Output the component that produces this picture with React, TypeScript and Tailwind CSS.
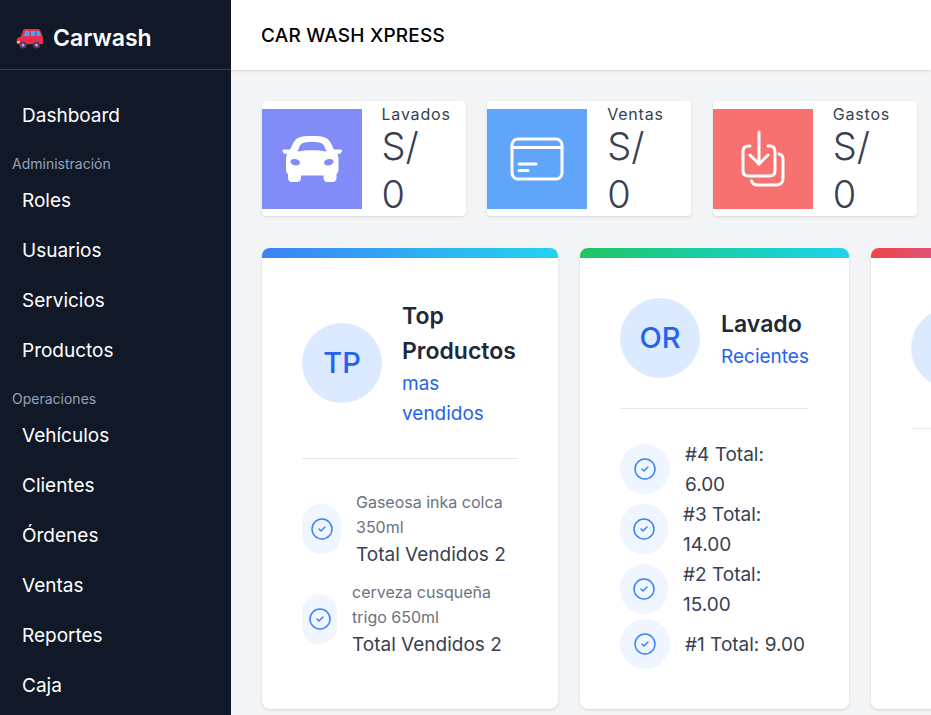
import React from 'react';
import { CircleCheck } from 'lucide-react';

const CarIcon = () => (
  <svg width="60" height="48" viewBox="0 0 60 48" fill="white">
    <path fillRule="evenodd" d="M17 2.500C20 1.300 24 1 30 1s10 .3 13 1.500c3 1.200 5 3.500 6.500 7L52 14.500h6.500c.8 0 1.500.6 1.500 1.300 0 2-1.500 3.200-4 3.200h-.8c1 1.700 1.300 3.800 1.300 6v10c0 1.700-.7 3-2 4v4c0 2.200-1.300 4-3.500 4h-6c-2.200 0-3.500-1.800-3.500-4v-2.500H19V43c0 2.200-1.300 4-3.500 4h-6C7.300 47 6 45.200 6 43v-4c-1.300-1-2-2.300-2-4V25c0-2.200.3-4.300 1.300-6h-.8c-2.500 0-4-1.200-4-3.200 0-.7.700-1.300 1.500-1.300H8l2.500-5c1.500-3.500 3.500-5.800 6.500-7zM21 8c-1.500.5-2.500 1.500-3.200 3l-2.300 5.500c5-.8 9.500-1.200 14.500-1.200s9.500.4 14.500 1.200L42.200 11c-.7-1.500-1.700-2.500-3.200-3-2.500-.7-5.500-1-9-1s-6.500.3-9 1zM12.500 24C9.500 24 8 25.500 8.500 27c.6 2 3 3.500 5.500 3.500 2.500 0 4-1 4-2.500 0-2.300-2.500-4-5.500-4zm35 0c-3 0-5.500 1.700-5.500 4 0 1.500 1.500 2.500 4 2.500s4.900-1.500 5.500-3.500c.5-1.500-1-3-4-3z" />
  </svg>
);

const CardIcon = () => (
  <svg width="54" height="44" viewBox="0 0 54 44" fill="none" stroke="white" strokeWidth="3" strokeLinecap="round" strokeLinejoin="round">
    <rect x="2" y="2" width="50" height="40" rx="6" />
    <path d="M2 10.500h50" />
    <path d="M9 27h17" />
    <path d="M9 33.500h9" />
  </svg>
);

const ImportIcon = () => (
  <svg width="44" height="58" viewBox="0 0 44 58" fill="none" stroke="white" strokeWidth="3" strokeLinecap="round" strokeLinejoin="round">
    <path d="M9 16H7.500C4 16 2 18 2 21.500v19C2 44 4 46 7.500 46h21C32 46 34 44 34 40.500v-19C34 18 32 16 28.500 16H27" />
    <path d="M18 2v32" />
    <path d="M9 25l9 9 9-9" />
    <path d="M38 24c2.500.5 4 2.500 4 5v19.500c0 4-2.500 6.500-6.500 6.500h-19c-3 0-5-1.500-6-4" />
  </svg>
);

const CarEmoji = () => (
  <svg width="28" height="22" viewBox="0 0 28 22">
    <path d="M7 2.500C7.500 1.500 8.500 1 9.500 1h12c1.500 0 2.500.7 3 2l2.500 6.500V15c0 .8-.5 1.300-1.300 1.300H2c-.8 0-1.300-.5-1.300-1.300v-3c0-1 .6-1.800 1.600-2.200L5 8.500z" fill="#e8304e" />
    <path d="M9.500 3h4v5h-6zM15 3h4v5h-4zM20.500 3h2c.5 0 1 .3 1.200.8L25 8h-4.500z" fill="#3fa9f5" />
    <path d="M1 13h3v2H1z" fill="#f8c44a" />
    <circle cx="7" cy="17" r="3.600" fill="#5b3a6b" />
    <circle cx="7" cy="17" r="1.500" fill="#b9a5c7" />
    <circle cx="20.500" cy="17" r="3.600" fill="#5b3a6b" />
    <circle cx="20.500" cy="17" r="1.500" fill="#b9a5c7" />
  </svg>
);

const stats = [
  { label: 'Lavados', color: 'bg-[#818cf8]', icon: <CarIcon /> },
  { label: 'Ventas', color: 'bg-[#60a5fa]', icon: <CardIcon /> },
  { label: 'Gastos', color: 'bg-[#f87171]', icon: <ImportIcon /> },
];

const Check = () => <CircleCheck size={24} strokeWidth={1.5} className="text-[#3b82f6]" />;

const Avatar = ({ text }: { text: string }) => (
  <div className="w-20 h-20 shrink-0 rounded-full bg-[#dbeafe] flex items-center justify-center text-[29px] font-medium text-[#2563eb]">
    {text}
  </div>
);

const NavItem = ({ children }: { children: React.ReactNode }) => (
  <a className="block h-[50px] pl-[22px] leading-[50px] text-[19px] text-white">{children}</a>
);

const Section = ({ children }: { children: React.ReactNode }) => (
  <p className="h-[35px] pl-3 pt-[13px] leading-[20px] text-[14px] text-[#94a3b8]">{children}</p>
);

const App = () => {
  return (
    <div className="flex h-[715px] w-[931px] overflow-hidden bg-[#f3f4f6] font-['Inter',sans-serif]">
      <aside className="w-[231px] shrink-0 bg-[#111827]">
        <div className="h-[70px] flex items-center gap-[9px] pl-4 pt-2 border-b border-[#374151]">
          <CarEmoji />
          <span className="text-[23px] font-semibold text-white">Carwash</span>
        </div>
        <nav className="pt-[21px]">
          <NavItem>Dashboard</NavItem>
          <Section>Administración</Section>
          <NavItem>Roles</NavItem>
          <NavItem>Usuarios</NavItem>
          <NavItem>Servicios</NavItem>
          <NavItem>Productos</NavItem>
          <Section>Operaciones</Section>
          <NavItem>Vehículos</NavItem>
          <NavItem>Clientes</NavItem>
          <NavItem>Órdenes</NavItem>
          <NavItem>Ventas</NavItem>
          <NavItem>Reportes</NavItem>
          <NavItem>Caja</NavItem>
        </nav>
      </aside>

      <div className="flex-1 min-w-0">
        <header className="h-[70px] flex items-center pl-[30px] pt-0.5 bg-white shadow">
          <h1 className="text-[19px] font-medium tracking-[0.2px] text-black">CAR WASH XPRESS</h1>
        </header>

        <main className="pl-[31px] pt-[31px] w-[1000px]">
          <div className="flex gap-[21.67px] -ml-[0.5px]">
            {stats.map((stat) => (
              <div key={stat.label} className="flex items-center w-[204px] h-[115px] bg-white rounded-sm shadow">
                <div className={`w-[100px] h-[100px] shrink-0 flex items-center justify-center ${stat.color}`}>
                  {stat.icon}
                </div>
                <div className="pl-5 w-[90px] self-start pt-[3px] text-[#374151]">
                  <p className="text-[16px] leading-5 tracking-wider">{stat.label}</p>
                  <p className="text-[38px] leading-[48px] font-light -mt-0.5">S/ 0</p>
                </div>
              </div>
            ))}
          </div>

          <div className="flex items-stretch gap-[22px] mt-8">
            <section className="w-[296px] h-[461px] bg-white rounded-lg shadow overflow-hidden">
              <div className="h-2.5 bg-gradient-to-r from-[#3b82f6] to-[#22d3ee]"></div>
              <div className="p-10">
                <div className="flex items-center gap-5 pb-[30px] border-b border-[#e5e7eb]">
                  <Avatar text="TP" />
                  <div className="translate-y-px">
                    <h2 className="text-[23px] leading-[35px] font-semibold text-[#1f2937]">Top Productos</h2>
                    <p className="text-[19px] leading-[30px] text-[#2563eb]">mas vendidos</p>
                  </div>
                </div>
                <ul className="mt-[30px] flex flex-col gap-2.5">
                  <li className="flex items-center">
                    <div className="w-[39px] h-[50px] shrink-0 mr-[15px] rounded-full bg-[#eff6ff] flex items-center justify-center"><Check /></div>
                    <div className="translate-y-px">
                      <p className="text-[16px] leading-[25px] text-[#6b7280]">Gaseosa inka colca 350ml</p>
                      <p className="text-[19px] leading-[30px] text-[#374151]">Total Vendidos 2</p>
                    </div>
                  </li>
                  <li className="flex items-center">
                    <div className="w-[35px] h-[50px] shrink-0 mr-[15px] rounded-full bg-[#eff6ff] flex items-center justify-center"><Check /></div>
                    <div className="translate-y-px">
                      <p className="text-[16px] leading-[25px] text-[#6b7280]">cerveza cusqueña trigo 650ml</p>
                      <p className="text-[19px] leading-[30px] text-[#374151]">Total Vendidos 2</p>
                    </div>
                  </li>
                </ul>
              </div>
            </section>

            <section className="w-[269px] h-[461px] bg-white rounded-lg shadow overflow-hidden">
              <div className="h-2.5 bg-gradient-to-r from-[#22c55e] to-[#22d3ee]"></div>
              <div className="p-10">
                <div className="flex items-center gap-[21px] pb-[30px] border-b border-[#e5e7eb]">
                  <Avatar text="OR" />
                  <div className="translate-y-px">
                    <h2 className="text-[23px] leading-[35px] font-semibold text-[#1f2937]">Lavado</h2>
                    <p className="text-[19px] leading-[30px] text-[#2563eb]">Recientes</p>
                  </div>
                </div>
                <ul className="mt-[30px]">
                  <li className="flex items-center">
                    <div className="w-[50px] h-[50px] shrink-0 mr-[15px] rounded-full bg-[#eff6ff] flex items-center justify-center"><Check /></div>
                    <p className="text-[19px] leading-[30px] text-[#374151] translate-y-px">#4 Total:<br />6.00</p>
                  </li>
                  <li className="flex items-center">
                    <div className="w-12 h-[50px] shrink-0 mr-[15px] rounded-full bg-[#eff6ff] flex items-center justify-center"><Check /></div>
                    <p className="text-[19px] leading-[30px] text-[#374151] translate-y-px">#3 Total:<br />14.00</p>
                  </li>
                  <li className="flex items-center">
                    <div className="w-12 h-[50px] shrink-0 mr-[15px] rounded-full bg-[#eff6ff] flex items-center justify-center"><Check /></div>
                    <p className="text-[19px] leading-[30px] text-[#374151] translate-y-px">#2 Total:<br />15.00</p>
                  </li>
                  <li className="flex items-center">
                    <div className="w-[50px] h-[50px] shrink-0 mr-[15px] rounded-full bg-[#eff6ff] flex items-center justify-center"><Check /></div>
                    <p className="text-[19px] leading-[30px] text-[#374151] translate-y-px">#1 Total: 9.00</p>
                  </li>
                </ul>
              </div>
            </section>

            <section className="w-[269px] h-[461px] bg-white rounded-lg shadow overflow-hidden">
              <div className="h-2.5 bg-gradient-to-r from-[#ef4444] to-[#a855f7]"></div>
              <div className="p-10">
                <div className="h-[131px] flex items-start pt-2.5 border-b border-[#e5e7eb]">
                  <Avatar text="" />
                </div>
              </div>
            </section>
          </div>
        </main>
      </div>
    </div>
  );
};

export default App;
